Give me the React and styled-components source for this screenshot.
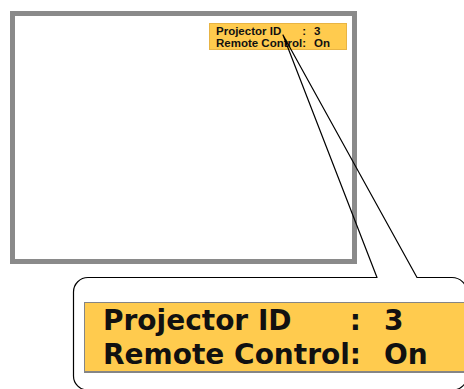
import styled, { createGlobalStyle } from "styled-components";

const GlobalStyle = createGlobalStyle`
  html, body {
    margin: 0;
    padding: 0;
    background: #fff;
    overflow: hidden;
  }
`;

const Canvas = styled.div`
  position: relative;
  width: 464px;
  height: 389px;
  overflow: hidden;
`;

const Screen = styled.div`
  box-sizing: border-box;
  width: 347px;
  height: 253px;
  margin: 11px 0 0 10px;
  border: 5px solid #8a8a8a;
  background: #fff;
  display: flex;
  justify-content: flex-end;
  align-items: flex-start;
  padding: 7px 5px 0 0;
`;

const Osd = styled.div`
  box-sizing: border-box;
  display: grid;
  grid-template-columns: max-content max-content max-content;
  background: #ffcb4e;
  color: #111;
  font-weight: bold;
  font-family: ${(p) =>
    p.$big ? '"DejaVu Sans", sans-serif' : '"Liberation Sans", Arial, sans-serif'};
  font-size: ${(p) => (p.$big ? "28px" : "11.5px")};
  line-height: ${(p) => (p.$big ? "33px" : "12px")};
`;

const SmallOsd = styled(Osd)`
  width: 138px;
  height: 27px;
  padding: 1px 0 0 6px;
  border: 1px solid #e8b444;
`;

const BigOsd = styled(Osd)`
  width: 420px;
  height: 71px;
  margin: 38px 0 0 84px;
  padding: 1px 0 0 18px;
  border: 1px solid #858585;
  border-right: none;
  border-bottom-width: 2px;
`;

const Value = styled.span`
  margin-left: ${(p) => (p.$big ? "23px" : "8px")};
`;

const Callout = styled.svg`
  position: absolute;
  left: 0;
  top: 0;
  pointer-events: none;
`;

const rows = [
  { label: "Projector ID", value: "3" },
  { label: "Remote Control", value: "On" },
];

function OsdRows({ big }) {
  return rows.map((r) => [
    <span key={r.label + "l"}>{r.label}</span>,
    <span key={r.label + "c"}>:</span>,
    <Value key={r.label + "v"} $big={big}>
      {r.value}
    </Value>,
  ]);
}

export default function App() {
  return (
    <>
      <GlobalStyle />
      <Canvas>
        <Screen>
          <SmallOsd>
            <OsdRows />
          </SmallOsd>
        </Screen>
        <BigOsd $big>
          <OsdRows big />
        </BigOsd>
        <Callout width="464" height="389" viewBox="0 0 464 389">
          <path
            d="M88 277.5 L377 277.5 L283 35 L417 277.5 L452 277.5 A15 15 0 0 1 467 292.5 L467 376 A14 14 0 0 1 453 390 L87.5 390 A14 14 0 0 1 73.5 376 L73.5 292 A14.5 14.5 0 0 1 88 277.5 Z"
            fill="none"
            stroke="#000"
            strokeWidth="1.2"
            strokeLinejoin="round"
          />
        </Callout>
      </Canvas>
    </>
  );
}
